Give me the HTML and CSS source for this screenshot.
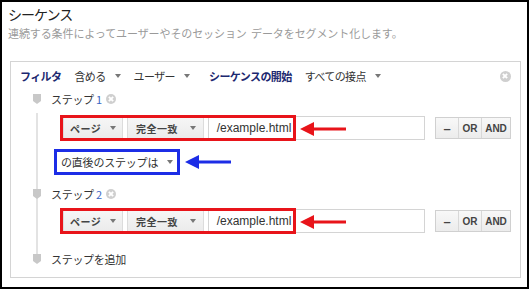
FILE: index.html
```html
<!DOCTYPE html>
<html lang="ja">

<head>
    <meta charset="UTF-8">
    <title>シーケンス</title>
    <link rel="stylesheet" href="styles.css">
</head>

<body>
    <div class="frame">
        <h2 class="title">シーケンス</h2>
        <p class="subtitle">連続する条件によってユーザーやそのセッション データをセグメント化します。</p>

        <div class="panel">
            <!-- フィルタ行 -->
            <div class="filter-row">
                <span class="strong">フィルタ</span>
                <span class="dd">含める <i class="caret"></i></span>
                <span class="dd dd-wide">ユーザー <i class="caret"></i></span>
                <span class="strong">シーケンスの開始</span>
                <span class="dd">すべての接点 <i class="caret"></i></span>
                <span class="close close-panel"></span>
            </div>

            <div class="steps">
                <!-- ステップ 1 -->
                <div class="step-head">
                    <svg class="marker" width="8" height="10" viewBox="0 0 8 10"><path d="M0 0H8V7L4 10L0 7Z" fill="#c8c8c8"/></svg>
                    <span>ステップ <b class="num">1</b></span>
                    <span class="close"></span>
                </div>
                <div class="cond-row">
                    <span class="sel sel-page">ページ <i class="caret"></i></span>
                    <span class="sel sel-match">完全一致 <i class="caret"></i></span>
                    <span class="input">/example.html</span>
                    <span class="ops"><b>&ndash;</b><b>OR</b><b>AND</b></span>
                    <span class="mark-red"></span>
                    <svg class="arrow arrow-red" width="46" height="14" viewBox="0 0 46 14"><path d="M12 5.5H46V8.5H12Z" fill="#e8141a"/><path d="M0 7L14 0V14Z" fill="#e8141a"/></svg>
                </div>

                <div class="next-row">
                    <span class="next-sel">の直後のステップは <i class="caret"></i></span>
                    <span class="mark-blue"></span>
                    <svg class="arrow arrow-blue" width="46" height="14" viewBox="0 0 46 14"><path d="M12 5.5H46V8.5H12Z" fill="#1c2de6"/><path d="M0 7L14 0V14Z" fill="#1c2de6"/></svg>
                </div>

                <!-- ステップ 2 -->
                <div class="step-head step-2">
                    <svg class="marker" width="8" height="10" viewBox="0 0 8 10"><path d="M0 0H8V7L4 10L0 7Z" fill="#c8c8c8"/></svg>
                    <span>ステップ <b class="num">2</b></span>
                    <span class="close"></span>
                </div>
                <div class="cond-row cond-2">
                    <span class="sel sel-page">ページ <i class="caret"></i></span>
                    <span class="sel sel-match">完全一致 <i class="caret"></i></span>
                    <span class="input">/example.html</span>
                    <span class="ops"><b>&ndash;</b><b>OR</b><b>AND</b></span>
                    <span class="mark-red"></span>
                    <svg class="arrow arrow-red" width="46" height="14" viewBox="0 0 46 14"><path d="M12 5.5H46V8.5H12Z" fill="#e8141a"/><path d="M0 7L14 0V14Z" fill="#e8141a"/></svg>
                </div>

                <div class="step-head add-step">
                    <svg class="marker" width="8" height="10" viewBox="0 0 8 10"><path d="M0 0H8V7L4 10L0 7Z" fill="#c8c8c8"/></svg>
                    <span>ステップを追加</span>
                </div>
            </div>
        </div>
    </div>
</body>

</html>
```

FILE: styles.css
```css
/* General */
body {
    margin: 0;
    padding: 0;
    background: #fff;
    font-family: 'Noto Sans CJK JP', 'Liberation Sans', sans-serif;
    color: #333;
}

.frame {
    width: 529px;
    height: 289px;
    box-sizing: border-box;
    border: 2px solid #000;
    padding: 3px 6px 0 6px;
    overflow: hidden;
}

.title {
    margin: 0;
    font-size: 14px;
    line-height: 18px;
    font-weight: normal;
    color: #222;
    letter-spacing: -1px;
}

.subtitle {
    margin: 3px 0 0;
    font-size: 11px;
    line-height: 14px;
    color: #9a9a9a;
    letter-spacing: -0.1px;
    word-spacing: 2px;
}

/* Panel */
.panel {
    margin: 21px 0 0 2px;
    border: 1px solid #d4d4d4;
    padding: 6px 9px 10px;
    position: relative;
}

.filter-row {
    display: flex;
    align-items: center;
    height: 16px;
    font-size: 11px;
    letter-spacing: -0.6px;
    color: #333;
    white-space: nowrap;
}

.filter-row > span {
    margin-right: 13px;
}

.filter-row > .dd-wide {
    margin-right: 19px;
}

.strong {
    font-weight: bold;
    color: #1c2870;
    letter-spacing: -0.6px;
}

.dd {
    display: flex;
    align-items: center;
}

.caret {
    display: inline-block;
    width: 0;
    height: 0;
    border-left: 3px solid transparent;
    border-right: 3px solid transparent;
    border-top: 4px solid #777;
    margin-left: 9px;
}

.close {
    display: inline-block;
    width: 10px;
    height: 10px;
    border-radius: 50%;
    background: #cfcfcf;
    position: relative;
}

.close::before,
.close::after {
    content: '';
    position: absolute;
    left: 2px;
    top: 4px;
    width: 6px;
    height: 2px;
    background: #fff;
    transform: rotate(45deg);
}

.close::after {
    transform: rotate(-45deg);
}

.filter-row .close-panel {
    margin: 0 0 0 auto;
    width: 11px;
    height: 11px;
}

/* Steps */
.steps {
    position: relative;
}

.steps::before {
    content: '';
    position: absolute;
    left: 16px;
    top: 22px;
    width: 2px;
    height: 148px;
    background: #e3e3e3;
}

.step-head {
    display: flex;
    align-items: center;
    height: 16px;
    margin-top: 7px;
    font-size: 11px;
    letter-spacing: -0.3px;
    color: #333;
}

.step-head .marker {
    margin: 0 10px 0 13px;
    position: relative;
}

.num {
    font-weight: normal;
    color: #3a66c4;
}

.step-head .close {
    margin-left: 4px;
}

.step-2 {
    margin-top: 14px;
}

.add-step {
    margin-top: 18px;
}

.cond-row {
    display: flex;
    align-items: center;
    height: 24px;
    margin: 9px 0 0 43px;
    position: relative;
}

.cond-2 {
    margin-top: 7px;
}

.sel {
    display: flex;
    align-items: center;
    justify-content: space-between;
    box-sizing: border-box;
    height: 22px;
    padding: 0 7px 0 6px;
    background: linear-gradient(#f6f6f6, #ebebeb);
    border: 1px solid #dcdcdc;
    font-size: 10px;
    font-weight: bold;
    color: #444;
    letter-spacing: 0.5px;
    white-space: nowrap;
    margin-right: 4px;
}

.sel-page {
    width: 60px;
}

.sel-match {
    width: 78px;
    padding-left: 8px;
}

.input {
    display: flex;
    align-items: center;
    box-sizing: border-box;
    width: 222px;
    height: 24px;
    padding-left: 8px;
    border: 1px solid #d4d4d4;
    font-family: 'Liberation Sans', Arial, sans-serif;
    font-size: 12px;
    color: #333;
}

.ops {
    display: flex;
    margin-left: 10px;
    height: 22px;
    border: 1px solid #d0d0d0;
    box-sizing: border-box;
    background: linear-gradient(#f8f8f8, #ececec);
}

.ops b {
    display: flex;
    align-items: center;
    justify-content: center;
    font-family: 'Liberation Sans', Arial, sans-serif;
    font-size: 10px;
    color: #444;
    width: 22px;
    border-left: 1px solid #d8d8d8;
}

.ops b:first-child {
    border-left: none;
    font-size: 13px;
}

.ops b:last-child {
    width: 28px;
}

/* 注釈 */
.mark-red {
    position: absolute;
    left: -3px;
    top: -1px;
    width: 236px;
    height: 26px;
    box-sizing: border-box;
    border: 3px solid #e8141a;
}

.arrow {
    position: absolute;
}

.arrow-red {
    left: 237px;
    top: 6px;
}

.next-row {
    position: relative;
    margin: 12px 0 0 37px;
    height: 20px;
    display: flex;
    align-items: center;
}

.next-sel {
    display: flex;
    align-items: center;
    font-size: 11px;
    letter-spacing: -0.2px;
    color: #333;
    padding-left: 4px;
}

.mark-blue {
    position: absolute;
    left: -3px;
    top: -3px;
    width: 126px;
    height: 26px;
    box-sizing: border-box;
    border: 3px solid #1c2de6;
}

.arrow-blue {
    left: 128px;
    top: 3px;
}
```
